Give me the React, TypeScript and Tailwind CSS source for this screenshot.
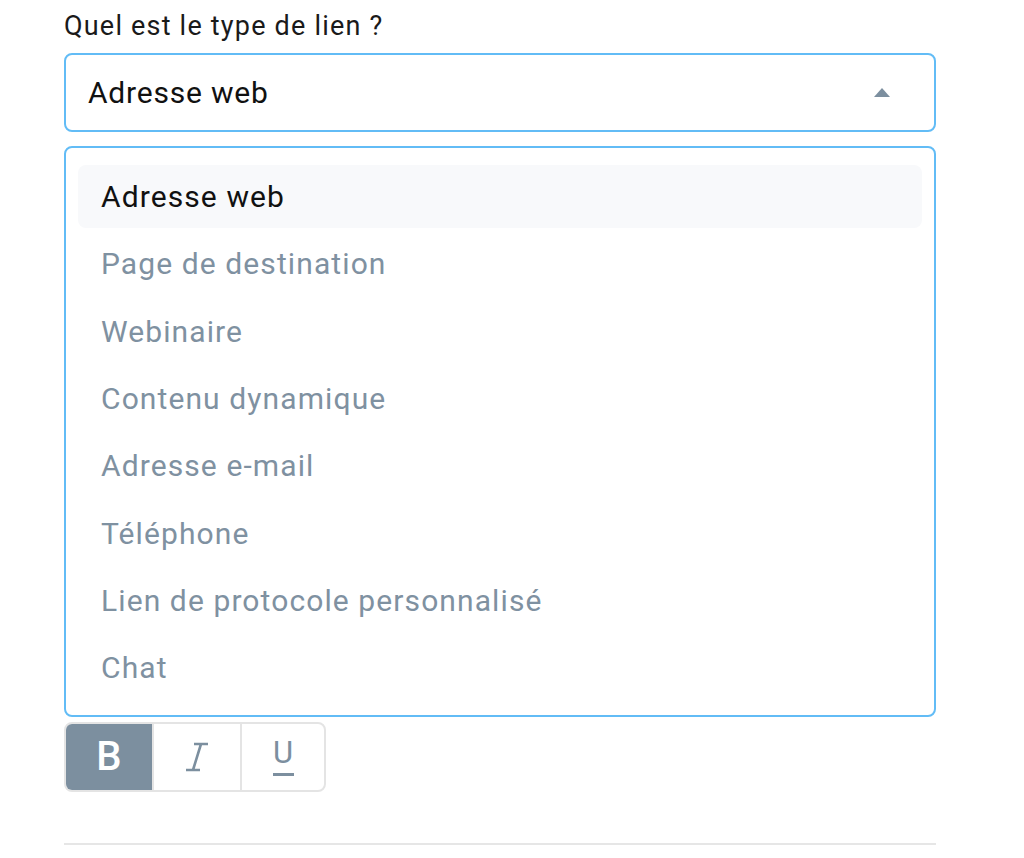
import { useState } from 'react';

const options = [
    'Adresse web',
    'Page de destination',
    'Webinaire',
    'Contenu dynamique',
    'Adresse e-mail',
    'Téléphone',
    'Lien de protocole personnalisé',
    'Chat',
];

export default function App() {
    const [selected] = useState('Adresse web');

    return (
        <div className="min-h-screen bg-white font-['Roboto',sans-serif]">
            <div className="w-[872px] ml-[64px] pt-[7px]">
                {/* Label */}
                <div className="text-[27px] leading-[38px] tracking-[1.2px] text-[#1a1a1a]">Quel est le type de lien ?</div>

                {/* Select */}
                <div className="mt-[8px] h-[79px] rounded-[8px] border-2 border-[#62bcf6] flex items-center justify-between pl-[22px] pr-[44px]">
                    <span className="text-[30px] tracking-[0.8px] text-[#111]">{selected}</span>
                    <svg width="16" height="9" viewBox="0 0 16 9">
                        <path d="M8 0 L16 9 L0 9 Z" fill="#7c8f9f" />
                    </svg>
                </div>

                {/* Options list */}
                <div className="mt-[14px] rounded-[8px] border-2 border-[#62bcf6] px-[12px] pt-[17px] pb-[16px] flex flex-col gap-[4px]">
                    {options.map((opt) => (
                        <div
                            key={opt}
                            className={
                                opt === selected
                                    ? 'h-[63.3px] rounded-[8px] bg-[#f8f9fb] flex items-center px-[23px] text-[30px] tracking-[1.1px] text-[#111]'
                                    : 'h-[63.3px] rounded-[8px] flex items-center px-[23px] text-[30px] tracking-[1.1px] text-[#7f91a1]'
                            }
                        >
                            {opt}
                        </div>
                    ))}
                </div>

                {/* Formatting toolbar */}
                <div className="mt-[5px] inline-flex h-[70px] rounded-[8px] border-2 border-[#e4e4e4] overflow-hidden">
                    <button className="w-[86px] bg-[#7c8f9f] text-white text-[40px] font-medium flex items-center justify-center">
                        B
                    </button>
                    <button className="w-[88px] border-l-2 border-[#e4e4e4] flex items-center justify-center">
                        <svg width="24" height="32" viewBox="0 0 24 32">
                            <path d="M9 3 H23 M1 29 H15 M16 3 L8 29" stroke="#7c8f9f" strokeWidth="2.6" fill="none" />
                        </svg>
                    </button>
                    <button className="w-[84px] border-l-2 border-[#e4e4e4] text-[#7c8f9f] flex flex-col items-center justify-center">
                        <span className="text-[31px] leading-[30px]">U</span>
                        <span className="mt-[5px] w-[21px] h-[3px] bg-[#7c8f9f]" />
                    </button>
                </div>

                <div className="mt-[51px] h-[2px] bg-[#e6e6e6]" />
            </div>
        </div>
    );
}
